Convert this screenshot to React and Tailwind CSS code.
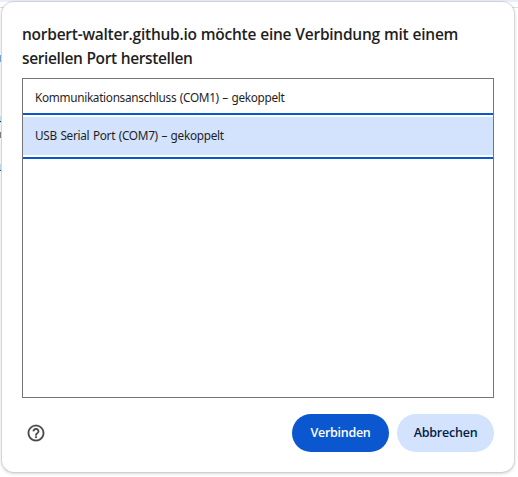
function PageBehind() {
  return (
    <div aria-hidden="true" className="absolute inset-0 overflow-hidden bg-white">
      <div className="h-[2px] bg-[#e9eef8]" />
      <div className="h-[6px] border-b border-[#dcdee2]" />
      <div className="absolute left-0 top-[55px] h-[7px] w-px bg-[#75aede]" />
      <div className="absolute left-0 top-[116px] h-[7px] w-px bg-[#c5eef0]" />
      <div className="absolute left-0 top-[121px] h-px w-px bg-[#123a6b]" />
      <div className="absolute left-0 top-[132px] h-[6px] w-px bg-[#81868d]" />
      <div className="absolute left-0 top-[164px] h-[7px] w-px bg-[#c5e5ea]" />
      <div className="absolute left-0 top-[170px] h-px w-px bg-[#0b57d0]" />
    </div>
  );
}

function Port({ name, selected }) {
  return selected ? (
    <li className="h-[46px] border-y-2 border-[#0b57d0] py-[2px]">
      <div className="flex h-[38px] items-center bg-[#d3e3fd] pb-[2px] pl-3">
        <span className="tracking-[-0.3px] [word-spacing:0.8px]">{name}</span>
      </div>
    </li>
  ) : (
    <li className="flex h-[34px] items-center pl-3 pt-[2px]">
      <span className="tracking-[-0.32px] [word-spacing:0.8px]">{name}</span>
    </li>
  );
}

export default function App() {
  return (
    <div className="relative h-[477px] w-[518px] overflow-hidden pl-[2px] pt-[2px] font-['Noto_Sans','Open_Sans',sans-serif] text-[#1f1f1f]">
      <PageBehind />
      <main className="relative flex h-[470px] w-[512px] flex-col rounded-[12px] bg-white px-5 pt-5 shadow-[0_0_0_1px_rgba(0,0,0,0.07),0_1px_3px_1px_rgba(0,0,0,0.15)]">
        <h1 className="h-14 whitespace-nowrap font-['Open_Sans','Noto_Sans',sans-serif] text-[15.5px] font-semibold leading-6">
          <span className="block tracking-[-0.25px] [word-spacing:0.3px]">norbert-walter.github.io möchte eine Verbindung mit einem</span>
          <span className="block tracking-[-0.37px] [word-spacing:0.3px]">seriellen Port herstellen</span>
        </h1>
        <ul className="h-[320px] w-[472px] border border-[#757575] text-[11.8px] leading-4">
          <Port name="Kommunikationsanschluss (COM1) – gekoppelt" />
          <Port name="USB Serial Port (COM7) – gekoppelt" selected />
        </ul>
        <footer className="mt-4 flex h-[38px] items-center gap-2 font-['Open_Sans','Noto_Sans',sans-serif] text-[12.5px] font-semibold">
          <button aria-label="Hilfe" className="ml-1 mr-auto h-5 w-5">
            <svg viewBox="0 0 24 24" className="h-5 w-5" fill="#474747" stroke="#474747" strokeWidth="0.2">
              <path d="M11 18h2v-2h-2v2zm1-16C6.48 2 2 6.48 2 12s4.480 10 10 10 10-4.480 10-10S17.520 2 12 2zm0 18c-4.410 0-8-3.590-8-8s3.590-8 8-8 8 3.590 8 8-3.590 8-8 8zm0-14c-2.210 0-4 1.790-4 4h2c0-1.100.9-2 2-2s2 .9 2 2c0 2-3 1.750-3 5h2c0-2.250 3-2.500 3-5 0-2.210-1.790-4-4-4z" />
            </svg>
          </button>
          <button className="h-[38px] w-[97px] rounded-full bg-[#0b57d0] pt-px text-white">
            <span className="tracking-[-0.28px]">Verbinden</span>
          </button>
          <button className="h-[38px] w-[97px] rounded-full bg-[#d3e3fd] pt-px text-[#041e49]">
            <span className="tracking-[-0.22px]">Abbrechen</span>
          </button>
        </footer>
      </main>
    </div>
  );
}
